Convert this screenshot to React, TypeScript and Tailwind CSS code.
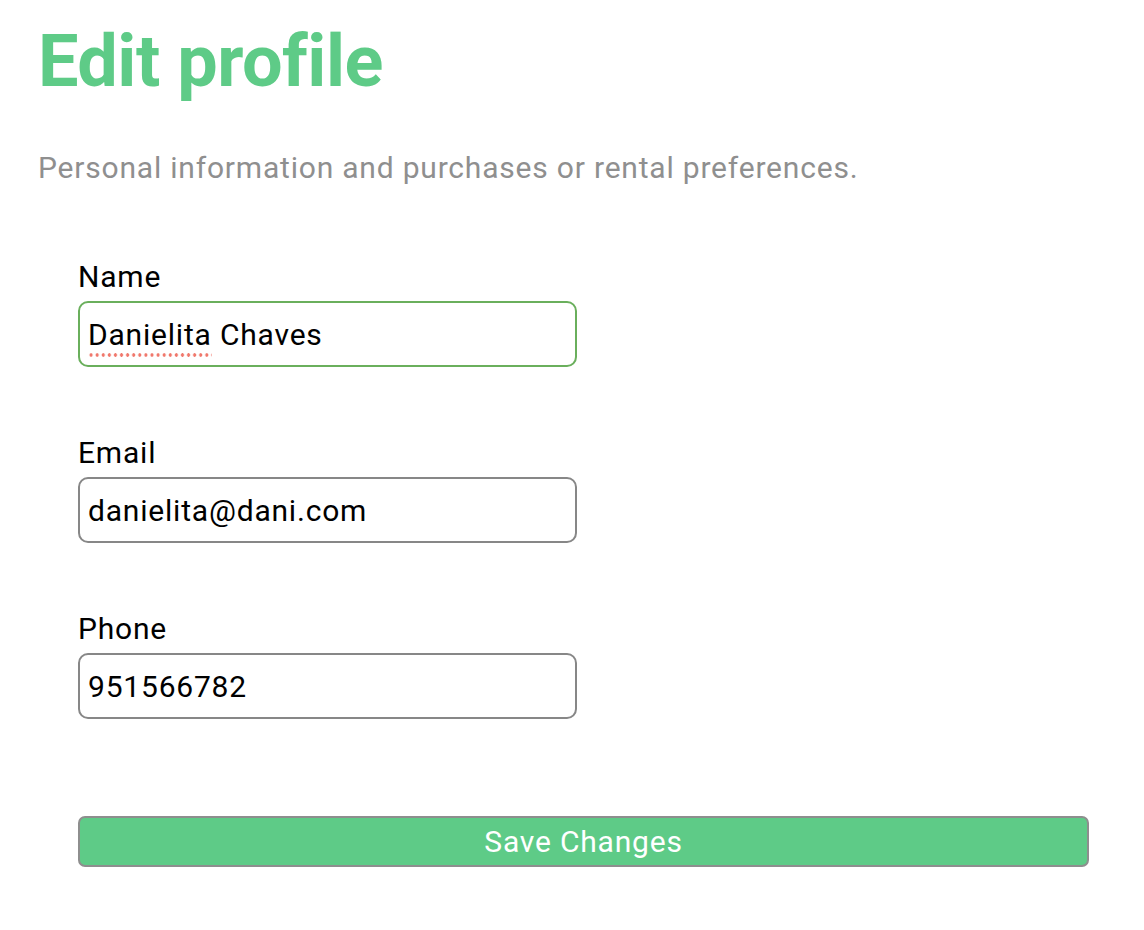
import React from "react";

const Field = ({ label, value, focused }: { label: string; value: string; focused?: boolean }) => (
  <div className="flex flex-col">
    <label className="text-[30px] leading-[35px] tracking-[0.8px] text-black">{label}</label>
    <div
      className={
        "mt-[7px] w-[499px] h-[66px] rounded-[10px] border-2 flex items-center px-[8px] text-[30px] leading-[35px] tracking-[0.8px] text-black " +
        (focused ? "border-[#6aaf5c]" : "border-[#878787]")
      }
    >
      {focused ? (
        <span>
          <span className="relative inline-block">
            Danielita
            <span className="absolute left-0 right-0 -bottom-[5px] h-[4px] bg-[radial-gradient(circle,#f0786c_1.5px,transparent_1.9px)] bg-[length:6.1px_4px] bg-repeat-x" />
          </span>{" "}
          Chaves
        </span>
      ) : (
        <span>{value}</span>
      )}
    </div>
  </div>
);

export default function App() {
  return (
    <div className="min-h-[930px] w-[1144px] bg-white" style={{ fontFamily: "Roboto, 'Liberation Sans', sans-serif" }}>
      <div className="pl-[38px] pt-[20px]">
        <h1 className="text-[72px] leading-[84px] font-bold tracking-[-0.5px] text-[#5ecb87]">Edit profile</h1>
        <p className="mt-[46px] text-[30px] leading-[35px] tracking-[0.8px] text-[#8f8f8f]">
          Personal information and purchases or rental preferences.
        </p>
      </div>
      <div className="pl-[78px] pt-[74px] flex flex-col gap-[68px]">
        <Field label="Name" value="Danielita Chaves" focused />
        <Field label="Email" value="danielita@dani.com" />
        <Field label="Phone" value="951566782" />
      </div>
      <div className="pl-[78px] pt-[97px]">
        <button className="w-[1011px] h-[51px] rounded-[7px] border-2 border-[#8e8e8e] bg-[#5ecb87] text-white text-[30px] leading-none tracking-[0.8px]">
          Save Changes
        </button>
      </div>
    </div>
  );
}
